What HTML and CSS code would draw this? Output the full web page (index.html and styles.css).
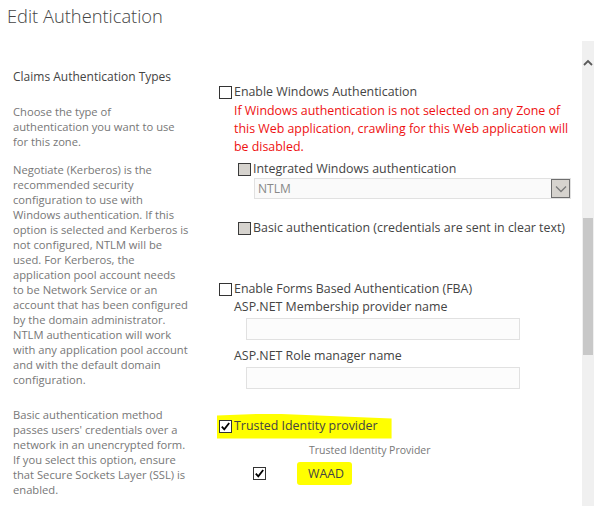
FILE: index.html
```html
<!DOCTYPE html>
<html>
<head>
<meta charset="utf-8">
<link rel="stylesheet" href="styles.css">
</head>
<body>
<div class="window">
  <h1 class="title">Edit Authentication</h1>
  <div class="content">
    <div class="section">
      <div class="left">
        <h2 class="heading">Claims Authentication Types</h2>
        <p class="desc p1">Choose the type of<br>authentication you want to use<br>for this zone.</p>
        <p class="desc p2">Negotiate (Kerberos) is the<br>recommended security<br>configuration to use with<br>Windows authentication. If this<br>option is selected and Kerberos is<br>not configured, NTLM will be<br>used. For Kerberos, the<br>application pool account needs<br>to be Network Service or an<br>account that has been configured<br>by the domain administrator.<br>NTLM authentication will work<br>with any application pool account<br>and with the default domain<br>configuration.</p>
        <p class="desc">Basic authentication method<br>passes users' credentials over a<br>network in an unencrypted form.<br>If you select this option, ensure<br>that Secure Sockets Layer (SSL) is<br>enabled.</p>
      </div>
      <div class="right">
        <div class="row"><span class="cb"></span><span class="label">Enable Windows Authentication</span></div>
        <div class="warn">If Windows authentication is not selected on any Zone of this Web application, crawling for this Web application will be disabled.</div>
        <div class="row sub r-int"><span class="cb dis"></span><span class="label">Integrated Windows authentication</span></div>
        <div class="select"><span class="sel-text">NTLM</span><span class="sel-btn"><svg width="12" height="8" viewBox="0 0 12 8"><path d="M1 1.5 L6 6.5 L11 1.5" fill="none" stroke="#7a7a7a" stroke-width="1.3"/></svg></span></div>
        <div class="row sub r-basic"><span class="cb dis"></span><span class="label">Basic authentication (credentials are sent in clear text)</span></div>
        <div class="row r-fba"><span class="cb"></span><span class="label">Enable Forms Based Authentication (FBA)</span></div>
        <div class="field-label">ASP.NET Membership provider name</div>
        <div class="input"></div>
        <div class="field-label r-role">ASP.NET Role manager name</div>
        <div class="input"></div>
        <div class="row r-trust"><span class="hl hl-trust"><span class="cb chk"><svg width="11" height="11" viewBox="0 0 11 11"><path d="M1.8 5.6 L4.3 8.3 L9.2 2" fill="none" stroke="#000" stroke-width="1.8"/></svg></span><span class="label">Trusted Identity provider</span></span></div>
        <div class="tip-head">Trusted Identity Provider</div>
        <div class="tip-row">
          <span class="cb chk"><svg width="11" height="11" viewBox="0 0 11 11"><path d="M1.8 5.6 L4.3 8.3 L9.2 2" fill="none" stroke="#000" stroke-width="1.8"/></svg></span>
          <span class="hl hl-waad">WAAD</span>
        </div>
      </div>
    </div>
    <div class="scrollbar">
      <svg class="arrow" width="10" height="7" viewBox="0 0 10 7"><path d="M1 6 L5 2 L9 6" fill="none" stroke="#5a5a5a" stroke-width="1.8"/></svg>
      <div class="thumb"></div>
    </div>
  </div>
</div>
</body>
</html>
```
FILE: styles.css
```css
html, body { margin: 0; padding: 0; background: #fff; }
body { width: 594px; height: 506px; overflow: hidden; font-family: "Open Sans", "Noto Sans", sans-serif; color: #444; }
.window { display: flex; flex-direction: column; height: 506px; }
.title { margin: 0; padding: 2px 0 0 7px; height: 39px; font-size: 18.3px; font-weight: 300; color: #444; line-height: 28px; }
.content { display: flex; flex: 1; }
.section { flex: 1; display: flex; padding-top: 27px; }
.left { width: 190px; padding-left: 13px; flex: none; }
.heading { margin: 0 0 18px; font-size: 12px; font-weight: 400; line-height: 18px; color: #444; }
.desc { margin: 0; font-size: 11.2px; line-height: 15px; color: #777; white-space: nowrap; }
.p1 { margin-bottom: 13px; }
.p2 { margin-bottom: 20px; }
.right { margin-left: 16px; padding-top: 15px; font-size: 12.4px; }
.row { display: flex; align-items: center; height: 18px; line-height: 18px; }
.label { margin-left: 2px; white-space: nowrap; }
.cb { width: 11px; height: 11px; border: 1px solid #333; background: #fff; display: inline-flex; align-items: center; justify-content: center; flex: none; }
.cb.dis { background: #d6d3ce; border-color: #3a3a3a; }
.warn { margin-top: 1px; padding-left: 15px; color: #ee1111; line-height: 18px; width: 335px; }
.sub { padding-left: 19px; }
.r-int { margin-top: 4px; }
.select { margin: 0 0 0 35px; width: 315px; height: 19px; border: 1px solid #e1e1e1; background: #fafafa; display: flex; justify-content: space-between; align-items: center; }
.sel-text { color: #888; padding-left: 3px; font-size: 12px; }
.sel-btn { width: 17px; height: 17px; border: 1px solid #6e6e6e; background: #d6d3ce; display: flex; align-items: center; justify-content: center; }
.r-basic { margin-top: 20px; }
.r-fba { margin-top: 43px; }
.field-label { padding-left: 15px; line-height: 18px; }
.input { margin: 2px 0 0 27px; width: 272px; height: 20px; border: 1.5px solid #e1e1e1; background: #fcfcfc; }
.r-role { margin-top: 7px; }
.r-trust { margin-top: 28px; }
.hl { background: #ffff00; }
.hl-trust { display: inline-flex; align-items: center; height: 25px; padding: 0 14px 0 2px; margin-left: -2px; clip-path: polygon(0 2px, 30% 0, 100% 5px, 100% 100%, 0 100%); }
.tip-head { margin: 7px 0 0 90px; font-size: 10.5px; line-height: 16px; color: #777; }
.tip-row { display: flex; align-items: center; margin-top: 3px; padding-left: 34px; height: 24px; }
.hl-waad { margin-left: 31px; padding: 0 8px 0 11px; height: 23px; line-height: 23px; border-radius: 3px; font-size: 12.4px; }
.scrollbar { width: 12px; background: #f0f0f0; display: flex; flex-direction: column; align-items: center; }
.arrow { margin-top: 18px; }
.thumb { margin-top: 152px; width: 10px; height: 137px; background: #c8c8c8; }
```
